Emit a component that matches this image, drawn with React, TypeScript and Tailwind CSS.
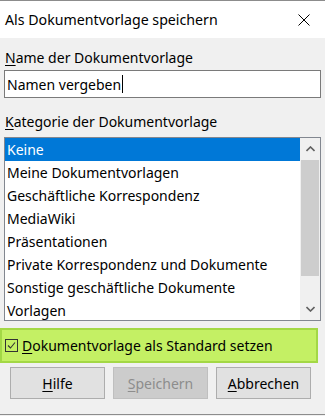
import React from 'react';

const kategorien = [
  'Keine',
  'Meine Dokumentvorlagen',
  'Geschäftliche Korrespondenz',
  'MediaWiki',
  'Präsentationen',
  'Private Korrespondenz und Dokumente',
  'Sonstige geschäftliche Dokumente',
  'Vorlagen',
];

const Btn: React.FC<{ accel: string; rest: string; disabled?: boolean }> = ({ accel, rest, disabled }) => (
  <button
    type="button"
    className={`w-[95px] h-[32px] border flex items-center justify-center ${
      disabled ? 'bg-[#cccccc] border-[#bfbfbf] text-[#8d8d8d]' : 'bg-[#e1e1e1] border-[#adadad] text-black'
    }`}
  >
    <span className="underline underline-offset-2 decoration-1">{accel}</span>
    {rest}
  </button>
);

export default function App() {
  return (
    <div
      className="w-[325px] h-[416px] bg-[#f0f0f0] flex flex-col text-[14px] text-black"
      style={{ fontFamily: '"Noto Sans", "Liberation Sans", sans-serif' }}
    >
      <div className="h-[1px] bg-[#8c8c8c]" />
      {/* Titelleiste */}
      <div className="h-[37px] bg-white flex items-center justify-between pl-[5px] pr-[15px] text-[14.2px]">
        <span>Als Dokumentvorlage speichern</span>
        <svg width="12" height="12" viewBox="0 0 12 12" className="text-black">
          <path d="M0.5 0.5 L11.5 11.5 M11.5 0.5 L0.5 11.5" stroke="currentColor" strokeWidth="1" />
        </svg>
      </div>

      <div className="flex flex-col px-[4px]">
        <label className="mt-[10px] h-[20px] leading-[20px] pl-[1px]">
          <span className="underline underline-offset-2 decoration-1">N</span>ame der Dokumentvorlage
        </label>
        <div className="mt-[2px] h-[28px] bg-white border border-[#7a7a7a] flex items-center pl-[2px]">
          <span>Namen vergeben</span>
          <span className="w-[1px] h-[18px] bg-black ml-[1px]" />
        </div>

        <label className="mt-[14px] h-[20px] leading-[20px] pl-[1px]">
          <span className="underline underline-offset-2 decoration-1">K</span>ategorie der Dokumentvorlage
        </label>
        <div className="mt-[5px] h-[184px] bg-white border border-[#828790] flex overflow-hidden">
          <div className="flex-1 flex flex-col">
            {kategorien.map((k, i) => (
              <div
                key={k}
                className={`h-[23px] shrink-0 leading-[23px] pl-[2px] whitespace-nowrap ${
                  i === 0 ? 'bg-[#0078d7] text-white' : ''
                }`}
              >
                {k}
              </div>
            ))}
          </div>
          {/* Scrollleiste */}
          <div className="w-[20px] bg-[#f0f0f0] flex flex-col items-center">
            <div className="h-[22px] flex items-center justify-center">
              <svg width="9" height="6" viewBox="0 0 9 6">
                <path d="M0.5 5 L4.5 1 L8.5 5" fill="none" stroke="#606060" strokeWidth="1.6" />
              </svg>
            </div>
            <div className="w-[18px] h-[116px] bg-[#cdcdcd]" />
            <div className="flex-1" />
            <div className="h-[22px] flex items-center justify-center">
              <svg width="9" height="6" viewBox="0 0 9 6">
                <path d="M0.5 1 L4.5 5 L8.5 1" fill="none" stroke="#606060" strokeWidth="1.6" />
              </svg>
            </div>
          </div>
        </div>
      </div>

      {/* Standard-Checkbox */}
      <div className="mt-[7px] w-[318px] h-[35px] bg-[#c4f064] border-2 border-[#a3d845] flex items-center pl-[3px]">
        <svg width="13" height="13" viewBox="0 0 13 13" className="shrink-0">
          <rect x="0.5" y="0.5" width="12" height="12" fill="none" stroke="#333333" strokeWidth="1" />
          <path d="M3 6.5 L5.5 9 L10 3.5" fill="none" stroke="#333333" strokeWidth="1.1" />
        </svg>
        <span className="ml-[4px]">
          <span className="underline underline-offset-2 decoration-1">D</span>okumentvorlage als Standard setzen
        </span>
      </div>

      {/* Schaltflächen */}
      <div className="mt-[4px] flex gap-[8px] pl-[10px]">
        <Btn accel="H" rest="ilfe" />
        <Btn accel="S" rest="peichern" disabled />
        <Btn accel="A" rest="bbrechen" />
      </div>

      <div className="flex-1" />
      <div className="h-[1px] bg-[#8c8c8c]" />
      <div className="h-[1px]" />
    </div>
  );
}
